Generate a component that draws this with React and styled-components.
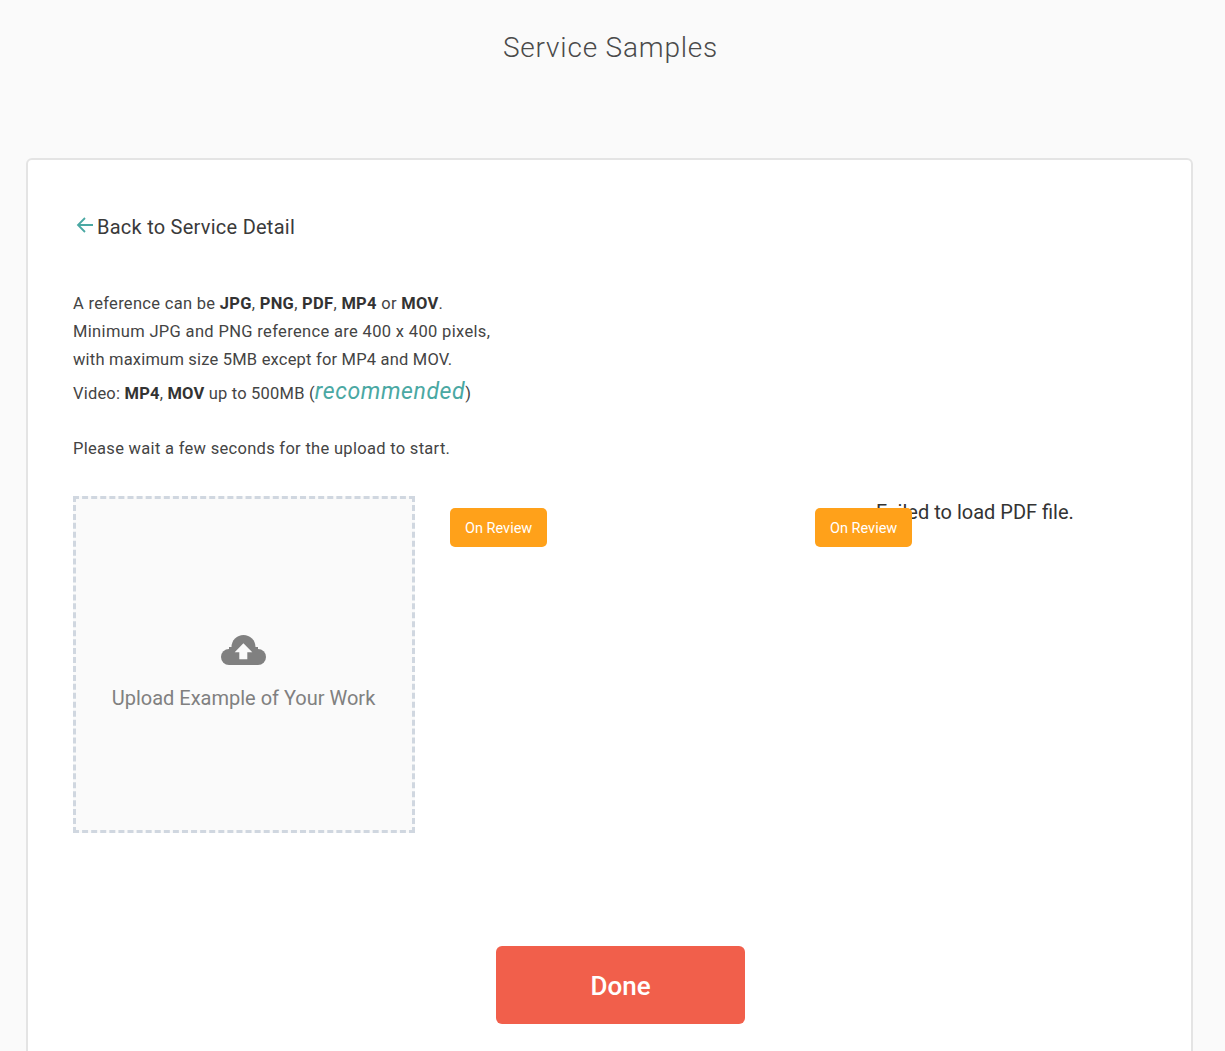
import React from 'react';
import styled, { createGlobalStyle } from 'styled-components';

const GlobalStyle = createGlobalStyle`
  html, body {
    margin: 0;
    height: 100%;
    overflow: hidden;
    background: #fafafa;
  }
  body {
    font-family: Roboto, "Liberation Sans", sans-serif;
    color: #333;
  }
`;

const Page = styled.div`
  height: 1051px;
  overflow: hidden;
  padding: 0 32px 0 26px;
  box-sizing: border-box;
`;

const Title = styled.h1`
  margin: 0;
  height: 158px;
  padding: 30px 0 0 2px;
  box-sizing: border-box;
  font-size: 28px;
  line-height: 36px;
  font-weight: 300;
  letter-spacing: 0.8px;
  color: #4a4a4a;
  text-align: center;
`;

const Card = styled.div`
  border: 2px solid #e4e4e4;
  border-radius: 6px;
  background: #fff;
  padding: 45px 45px 80px;
  min-height: 1000px;
`;

const BackLink = styled.a`
  display: flex;
  align-items: center;
  gap: 3px;
  height: 44px;
  margin-left: 3px;
  font-size: 20px;
  letter-spacing: 0.25px;
  color: #3a3a3a;
  cursor: pointer;
`;

const BackArrow = styled.svg`
  width: 18px;
  height: 18px;
  margin-top: -4px;
  fill: none;
  stroke: #4aa8a3;
  stroke-width: 1.8;
`;

const Notes = styled.div`
  margin-top: 41px;
`;

const Line = styled.p`
  margin: 0;
  height: 28px;
  font-size: 16.5px;
  line-height: 28px;
  letter-spacing: ${(p) => p.$spacing || '0.3px'};
  color: #444;
`;

const VideoLine = styled(Line)`
  height: 40px;
  line-height: 36px;
`;

const WaitLine = styled(Line)`
  margin-top: 21px;
`;

const Strong = styled.b`
  font-weight: 700;
  color: #333;
`;

const Recommended = styled.em`
  font-size: 23px;
  font-weight: 400;
  font-style: italic;
  letter-spacing: 0.6px;
  color: #4aa8a3;
`;

const Gallery = styled.div`
  display: grid;
  grid-template-columns: 342px 330px 1fr;
  column-gap: 35px;
  margin-top: 33px;
`;

const Dropzone = styled.div`
  height: 337px;
  box-sizing: border-box;
  border: 3px dashed #d0d7e0;
  background: #fafafa;
  display: flex;
  flex-direction: column;
  align-items: center;
  justify-content: center;
  padding: 15px 1px 0 0;
  color: #808080;
  font-size: 20px;
  line-height: 24px;
`;

const CloudIcon = styled.svg`
  width: 45px;
  height: 30px;
  margin-bottom: 21px;
  fill: #808080;
`;

const CloudArrow = styled.path`
  fill: #fafafa;
`;

const Sample = styled.div`
  position: relative;
  min-height: 337px;
`;

const Badge = styled.span`
  position: absolute;
  top: 12px;
  left: 0;
  padding: 0 15px;
  height: 39px;
  line-height: 41px;
  border-radius: 5px;
  background: #ffa11a;
  color: #fff;
  font-size: 14.5px;
`;

const PdfError = styled.div`
  padding: 4px 0 0 61px;
  font-size: 20px;
  line-height: 24px;
  color: #333;
`;

const Footer = styled.div`
  display: flex;
  justify-content: center;
  margin-top: 113px;
  padding-left: 22px;
`;

const DoneButton = styled.button`
  width: 249px;
  height: 78px;
  padding-top: 3px;
  border: 0;
  border-radius: 6px;
  background: #f15f4b;
  color: #fff;
  font-family: inherit;
  font-size: 26px;
  font-weight: 500;
  cursor: pointer;
`;

export default function App() {
  return (
    <Page>
      <GlobalStyle />
      <Title>Service Samples</Title>
      <Card>
        <BackLink>
          <BackArrow viewBox="0 0 18 18">
            <path d="M17 9H2M9 2 2 9l7 7" />
          </BackArrow>
          Back to Service Detail
        </BackLink>
        <Notes>
          <Line>
            A reference can be <Strong>JPG</Strong>, <Strong>PNG</Strong>, <Strong>PDF</Strong>, <Strong>MP4</Strong> or <Strong>MOV</Strong>.
          </Line>
          <Line $spacing="0.34px">Minimum JPG and PNG reference are 400 x 400 pixels,</Line>
          <Line $spacing="0.2px">with maximum size 5MB except for MP4 and MOV.</Line>
          <VideoLine $spacing="0.2px">
            Video: <Strong>MP4</Strong>, <Strong>MOV</Strong> up to 500MB (<Recommended>recommended</Recommended>)
          </VideoLine>
          <WaitLine>Please wait a few seconds for the upload to start.</WaitLine>
        </Notes>
        <Gallery>
          <Dropzone>
            <CloudIcon viewBox="0 0 45 30">
              <circle cx="8" cy="22" r="8" />
              <circle cx="22.5" cy="12" r="12" />
              <circle cx="37" cy="22" r="8" />
              <rect x="8" y="12" width="29" height="18" />
              <CloudArrow d="M22.4 8.3 31.3 17.3H26.3V24.3H18.3V17.3H13.7Z" />
            </CloudIcon>
            Upload Example of Your Work
          </Dropzone>
          <Sample>
            <Badge>On Review</Badge>
          </Sample>
          <Sample>
            <PdfError>Failed to load PDF file.</PdfError>
            <Badge>On Review</Badge>
          </Sample>
        </Gallery>
        <Footer>
          <DoneButton>Done</DoneButton>
        </Footer>
      </Card>
    </Page>
  );
}
